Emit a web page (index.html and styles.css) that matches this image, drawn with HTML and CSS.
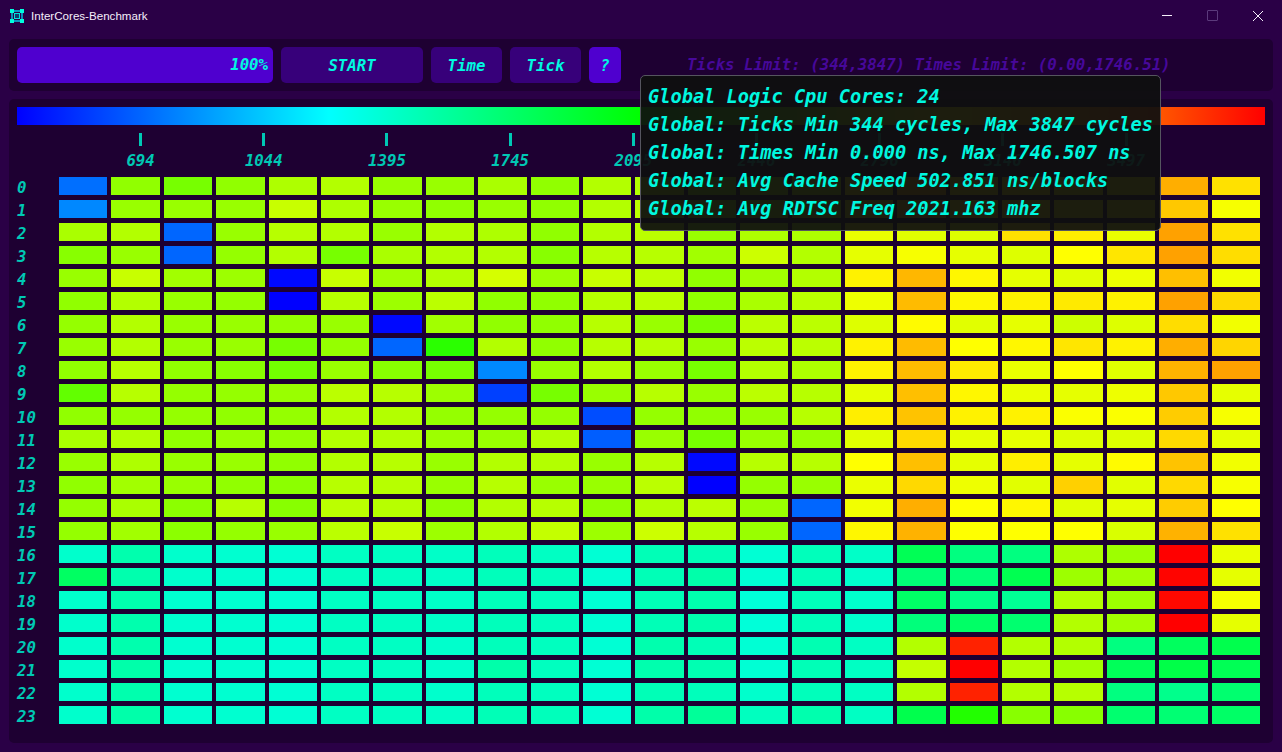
FILE: index.html
```html
<!DOCTYPE html>
<html lang="en">
<head>
<meta charset="UTF-8" />
<title>InterCores-Benchmark</title>
<link rel="stylesheet" href="styles.css">
</head>
<body>

<header class="titlebar">
  <svg class="app-icon" viewBox="0 0 14 14" width="14" height="14">
    <path d="M2 2H12V12H2Z" fill="none" stroke="#00c8e8" stroke-width="1.4"/>
    <rect x="0" y="0" width="4" height="4" fill="#00ffe0"/>
    <rect x="10" y="0" width="4" height="4" fill="#00ffe0"/>
    <rect x="0" y="10" width="4" height="4" fill="#00ffe0"/>
    <rect x="10" y="10" width="4" height="4" fill="#00ffe0"/>
    <rect x="4.5" y="4.5" width="5" height="5" fill="#103a70" stroke="#00e0e0" stroke-width="1"/>
  </svg>
  <span class="app-title">InterCores-Benchmark</span>
  <div class="win-controls">
    <span class="win-min"></span>
    <span class="win-max"></span>
    <svg class="win-close" viewBox="0 0 10 10" width="10" height="10">
      <path d="M0 0L10 10M10 0L0 10" stroke="#f4eefa" stroke-width="1"/>
    </svg>
  </div>
</header>

<section class="panel toolbar">
  <div class="progress">100%</div>
  <button class="btn btn-start">START</button>
  <button class="btn btn-small">Time</button>
  <button class="btn btn-small">Tick</button>
  <button class="btn btn-help">?</button>
  <div class="limits">Ticks Limit: (344,3847) Times Limit: (0.00,1746.51)</div>
</section>

<section class="panel chart">
  <div class="legend"></div>
  <div class="scale">
    <div class="tick"><i></i><span>694</span></div>
    <div class="tick"><i></i><span>1044</span></div>
    <div class="tick"><i></i><span>1395</span></div>
    <div class="tick"><i></i><span>1745</span></div>
    <div class="tick"><i></i><span>2095</span></div>
    <div class="tick"><i></i><span>2446</span></div>
    <div class="tick"><i></i><span>2796</span></div>
    <div class="tick"><i></i><span>3146</span></div>
    <div class="tick"><i></i><span>3497</span></div>
  </div>
  <div id="heatmap" class="heatmap"></div>
</section>

<div class="tooltip">
  <div>Global Logic Cpu Cores: 24</div>
  <div>Global: Ticks Min 344 cycles, Max 3847 cycles</div>
  <div>Global: Times Min 0.000 ns, Max 1746.507 ns</div>
  <div>Global: Avg Cache Speed 502.851 ns/blocks</div>
  <div>Global: Avg RDTSC Freq 2021.163 mhz</div>
</div>

<script src="script.js"></script>
</body>
</html>
```

FILE: styles.css
```css
html, body {
  margin: 0;
  height: 100%;
}
body {
  background: #2a0046;
  overflow: hidden;
  font-family: "DejaVu Sans Mono", "Liberation Mono", monospace;
  font-weight: bold;
  font-style: italic;
}
.titlebar {
  height: 31px;
  padding: 0 19px 8px 10px;
  display: flex;
  align-items: center;
  color: #f4eefa;
  font: normal 11.6px "Liberation Sans", sans-serif;
}
.app-icon {
  margin-right: 7px;
}
.win-controls {
  margin-left: auto;
  display: flex;
  align-items: center;
  gap: 35px;
}
.win-min {
  width: 10px;
  height: 1px;
  background: #f4eefa;
}
.win-max {
  width: 9px;
  height: 9px;
  border: 1px solid #5b3a7c;
  border-radius: 1px;
}
.panel {
  margin: 0 9px;
  background: #1e0032;
  border-radius: 5px;
  padding: 8px;
}
.toolbar {
  height: 36px;
  display: flex;
  gap: 8px;
  font-size: 15.7px;
  color: #00f8e0;
}
.progress {
  width: 256px;
  box-sizing: border-box;
  padding-right: 5px;
  background: #4f00cf;
  border-radius: 5px;
  text-align: right;
  line-height: 36px;
}
.btn {
  height: 36px;
  padding: 0;
  border: none;
  border-radius: 5px;
  background: #37007a;
  color: inherit;
  font: inherit;
}
.btn-start {
  width: 142px;
}
.btn-small {
  width: 71px;
}
.btn-help {
  width: 32px;
  background: #4f00cf;
}
.limits {
  margin-left: 58px;
  line-height: 36px;
  font-size: 15.75px;
  color: #47089a;
  white-space: nowrap;
}
.chart {
  margin-top: 8px;
  height: 628px;
}
.legend {
  width: 1248px;
  height: 18px;
  background: linear-gradient(to right, #0000ff, #00ffff, #00ff00, #ffff00, #ff0000);
}
.scale {
  display: flex;
  padding: 8px 0 0 62px;
  font-size: 15.7px;
  color: #00c8b4;
}
.tick {
  width: 123.2px;
  display: flex;
  flex-direction: column;
  align-items: center;
}
.tick i {
  width: 3px;
  height: 13px;
  background: #00c8b4;
}
.tick span {
  line-height: 30px;
}
.heatmap {
  display: grid;
  grid-template-columns: 38px repeat(23, 48.4px);
  grid-auto-rows: 18px;
  column-gap: 4px;
  row-gap: 5px;
  margin-top: 1px;
  font-size: 15.7px;
  color: #00c8b4;
}
.row-label {
  line-height: 22px;
  white-space: nowrap;
}
.cell {
  display: block;
}
.tooltip {
  position: absolute;
  left: 640px;
  top: 75px;
  width: 505px;
  padding: 7px;
  background: rgba(15, 15, 15, 0.94);
  border: 1px solid #55555f;
  border-radius: 5px;
  color: #00f8e0;
  font-size: 18.65px;
  line-height: 28px;
  white-space: nowrap;
}
```

FILE: script.js
```js
// hue of every cell, core by core (240 = fastest/blue, 0 = slowest/red)
const hues = [
  [214,86,92,86,79,78,84,84,80,86,78,78,84,80,76,62,45,60,60,65,65,41,53],
  [208,84,84,84,73,79,84,86,84,86,78,76,84,80,76,64,48,62,62,66,66,47,62],
  [80,78,216,84,77,78,84,78,79,86,78,76,84,79,79,65,67,68,53,56,65,38,53],
  [88,84,216,85,78,92,80,78,78,88,77,77,82,72,78,66,62,66,68,60,54,38,52],
  [84,73,82,83,238,73,82,78,70,83,73,75,86,82,78,57,43,58,66,67,64,45,63],
  [86,78,84,85,240,77,83,76,86,86,77,76,86,80,76,64,44,58,57,55,57,38,51],
  [85,78,84,84,85,84,238,82,86,86,77,84,91,76,76,68,59,67,66,72,68,52,63],
  [84,78,84,84,92,85,216,110,78,86,77,77,84,76,76,57,44,60,58,54,57,41,50],
  [86,77,86,88,93,84,88,92,208,84,78,84,92,78,79,57,44,55,65,60,67,42,38],
  [97,77,85,85,84,76,77,83,225,92,84,77,84,76,77,66,45,58,65,66,64,47,66],
  [86,85,85,86,85,78,78,85,85,85,222,85,86,84,77,56,46,57,57,61,61,48,62],
  [80,78,86,84,85,78,78,83,84,78,218,84,92,84,84,67,51,66,66,68,68,51,66],
  [84,79,84,84,86,78,77,84,78,78,84,77,238,77,77,60,45,66,56,66,59,46,63],
  [86,82,84,86,87,77,77,84,77,84,84,76,240,85,84,65,51,64,67,49,67,51,62],
  [85,80,87,77,88,76,77,86,78,77,86,78,76,84,216,63,41,60,58,67,66,48,60],
  [85,82,87,85,84,76,73,83,78,74,83,72,77,84,216,58,42,60,60,60,69,42,53],
  [168,161,168,169,170,166,166,167,164,166,170,163,163,170,164,167,140,150,150,79,83,0,65],
  [143,161,168,169,170,166,166,167,164,165,170,163,160,170,164,168,148,148,139,83,82,1,66],
  [168,161,169,169,170,166,166,167,164,165,170,163,161,171,164,168,144,152,155,78,83,2,62],
  [168,161,169,169,170,166,166,167,164,165,170,163,161,171,164,168,149,144,146,78,82,0,66],
  [168,161,169,169,170,166,166,168,164,165,170,161,163,170,162,166,78,8,78,78,150,142,138],
  [168,160,169,169,170,166,166,168,160,165,170,161,162,170,163,166,74,0,78,82,141,137,140],
  [168,161,169,169,170,166,166,168,164,165,170,163,164,168,164,166,78,8,78,77,150,153,146],
  [168,160,169,169,170,166,166,167,163,164,170,160,156,165,161,166,138,112,88,88,146,147,144]
];

const heatmap = document.getElementById('heatmap');

hues.forEach((row, core) => {
  const label = document.createElement('div');
  label.className = 'row-label';
  label.textContent = core;
  heatmap.appendChild(label);

  row.forEach(hue => {
    const cell = document.createElement('div');
    cell.className = 'cell';
    cell.style.background = `hsl(${hue}, 100%, 50%)`;
    heatmap.appendChild(cell);
  });
});
```
